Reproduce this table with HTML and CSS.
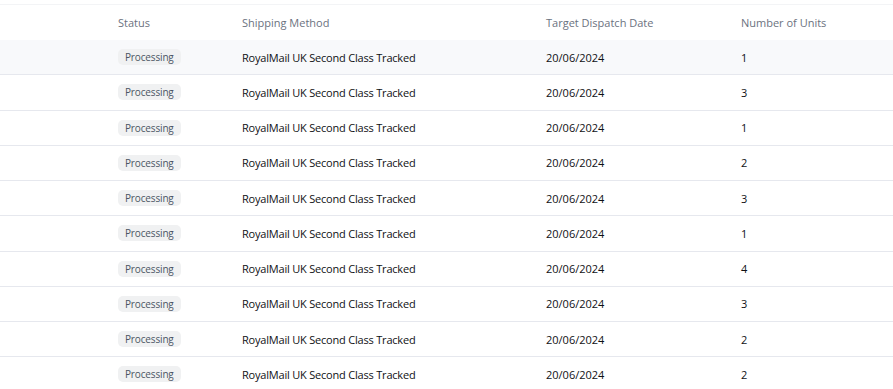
FILE: index.html
```html
<!DOCTYPE html>
<html>
<head>
<meta charset="utf-8">
<link rel="stylesheet" href="styles.css">
</head>
<body>
<div class="table">
  <div class="row head">
    <div>Status</div><div>Shipping Method</div><div>Target Dispatch Date</div><div>Number of Units</div>
  </div>
  <div class="row hl"><div><span class="badge">Processing</span></div><div class="ship">RoyalMail UK Second Class Tracked</div><div>20/06/2024</div><div>1</div></div>
  <div class="row"><div><span class="badge">Processing</span></div><div class="ship">RoyalMail UK Second Class Tracked</div><div>20/06/2024</div><div>3</div></div>
  <div class="row"><div><span class="badge">Processing</span></div><div class="ship">RoyalMail UK Second Class Tracked</div><div>20/06/2024</div><div>1</div></div>
  <div class="row"><div><span class="badge">Processing</span></div><div class="ship">RoyalMail UK Second Class Tracked</div><div>20/06/2024</div><div>2</div></div>
  <div class="row"><div><span class="badge">Processing</span></div><div class="ship">RoyalMail UK Second Class Tracked</div><div>20/06/2024</div><div>3</div></div>
  <div class="row"><div><span class="badge">Processing</span></div><div class="ship">RoyalMail UK Second Class Tracked</div><div>20/06/2024</div><div>1</div></div>
  <div class="row"><div><span class="badge">Processing</span></div><div class="ship">RoyalMail UK Second Class Tracked</div><div>20/06/2024</div><div>4</div></div>
  <div class="row"><div><span class="badge">Processing</span></div><div class="ship">RoyalMail UK Second Class Tracked</div><div>20/06/2024</div><div>3</div></div>
  <div class="row"><div><span class="badge">Processing</span></div><div class="ship">RoyalMail UK Second Class Tracked</div><div>20/06/2024</div><div>2</div></div>
  <div class="row"><div><span class="badge">Processing</span></div><div class="ship">RoyalMail UK Second Class Tracked</div><div>20/06/2024</div><div>2</div></div>
</div>
</body>
</html>
```
FILE: styles.css
```css
html, body {
  margin: 0;
  padding: 0;
  background: #ffffff;
}
body {
  font-family: "Open Sans", "Noto Sans", sans-serif;
  font-size: 11px;
  color: #0f1114;
}
.table {
  margin-top: 4px;
  border-top: 1px solid #f3f4f6;
}
.row {
  display: grid;
  grid-template-columns: 124px 304px 195px 1fr;
  padding-left: 118px;
  align-items: center;
  height: 34.25px;
  border-bottom: 1px solid #e6e8ee;
}
.row.head {
  height: 35px;
  border-bottom: none;
  color: #6b7280;
}
.row.hl {
  background: #f8f9fb;
}
.ship {
  letter-spacing: -0.2px;
}
.badge {
  display: inline-block;
  background: #f0f1f2;
  color: #4b5563;
  font-size: 10px;
  letter-spacing: -0.15px;
  line-height: 16px;
  padding: 0 7px;
  border-radius: 5px;
}
```
